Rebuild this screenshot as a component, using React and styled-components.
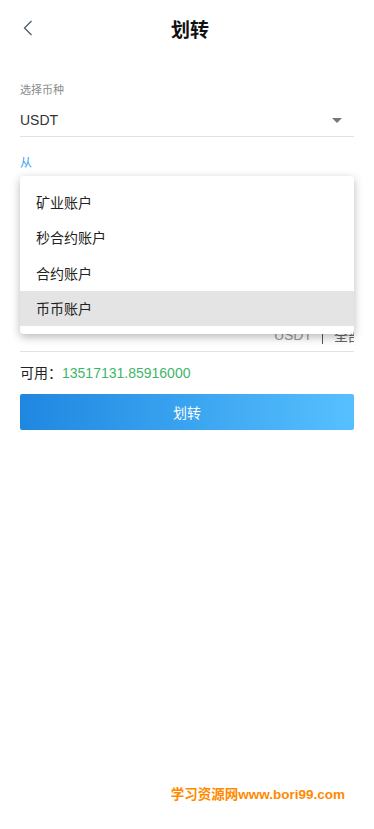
import React from 'react';
import styled, { createGlobalStyle } from 'styled-components';

const accounts = ['矿业账户', '秒合约账户', '合约账户', '币币账户'];

const GlobalStyle = createGlobalStyle`
  html, body {
    margin: 0;
    padding: 0;
    background: #fff;
    font-family: "Liberation Sans", "Noto Sans CJK SC", sans-serif;
  }
`;

const App = () => {
  return (
    <Page>
      <GlobalStyle />
      <Header>
        <Back>
          <svg width="10" height="16" viewBox="0 0 10 16">
            <path d="M8.5 1 L1.5 8 L8.5 15" fill="none" stroke="#4f5b66" strokeWidth="1.3" />
          </svg>
        </Back>
        <Title>划转</Title>
      </Header>

      <Body>
        <Field>
          <Label>选择币种</Label>
          <SelectRow>
            <span>USDT</span>
            <Caret />
          </SelectRow>
        </Field>

        <Field $gap={18}>
          <Label $active>从</Label>
          <SelectRow>
            <span>币币账户</span>
            <Caret />
          </SelectRow>
          <Menu>
            {accounts.map((a) => (
              <MenuItem key={a} $selected={a === '币币账户'}>{a}</MenuItem>
            ))}
          </Menu>
        </Field>

        <Field $gap={18}>
          <Label>到</Label>
          <SelectRow>
            <span>合约账户</span>
            <Caret />
          </SelectRow>
        </Field>

        <Field $gap={14}>
          <Label>数量</Label>
          <AmountRow>
            <AmountInput />
            <Unit>USDT</Unit>
            <Divider />
            <All>全部</All>
          </AmountRow>
        </Field>

        <Available>
          可用：<Amount>13517131.85916000</Amount>
        </Available>

        <Button>划转</Button>
      </Body>

      <Footer>学习资源网www.bori99.com</Footer>
    </Page>
  );
};

const Page = styled.div`
  min-height: 100vh;
  display: flex;
  flex-direction: column;
`;

const Header = styled.div`
  position: relative;
  height: 56px;
  display: flex;
  align-items: center;
  justify-content: center;
`;

const Back = styled.div`
  position: absolute;
  left: 23px;
  top: 20px;
  width: 10px;
  height: 16px;
  display: flex;
`;

const Title = styled.h1`
  margin: 0;
  padding-left: 6px;
  font-size: 19px;
  font-weight: bold;
  color: #111;
`;

const Body = styled.div`
  padding: 26px 20px 0;
`;

const Field = styled.div`
  position: relative;
  margin-top: ${(p) => p.$gap || 0}px;
`;

const Label = styled.div`
  font-size: ${(p) => (p.$active ? 12 : 11)}px;
  line-height: 16px;
  color: ${(p) => (p.$active ? '#3d9ff3' : '#8a8a8a')};
`;

const SelectRow = styled.div`
  margin-top: 6px;
  height: 32px;
  display: flex;
  align-items: center;
  justify-content: space-between;
  border-bottom: 1px solid #e2e2e2;
  font-size: 14px;
  color: #333;
`;

const Caret = styled.span`
  margin-right: 12px;
  width: 0;
  height: 0;
  border-left: 5px solid transparent;
  border-right: 5px solid transparent;
  border-top: 5px solid #777;
`;

const Menu = styled.div`
  position: absolute;
  top: 21px;
  left: 0;
  right: 0;
  z-index: 10;
  padding: 8px 0;
  background: #fff;
  border-radius: 4px;
  box-shadow: 0 3px 10px rgba(0, 0, 0, 0.28);
`;

const MenuItem = styled.div`
  height: 35.5px;
  padding: 0 16px;
  display: flex;
  align-items: center;
  font-size: 14px;
  color: #222;
  background: ${(p) => (p.$selected ? '#e4e4e4' : 'transparent')};
`;

const AmountRow = styled.div`
  margin-top: 6px;
  height: 32px;
  display: flex;
  align-items: center;
  overflow: hidden;
  border-bottom: 1px solid #e2e2e2;
  font-size: 14px;
  white-space: nowrap;
`;

const AmountInput = styled.span`
  flex: 1;
`;

const Unit = styled.span`
  color: #999;
`;

const Divider = styled.span`
  width: 1px;
  height: 17px;
  margin: 0 11px 0 10px;
  background: #555;
`;

const All = styled.span`
  margin-right: -8px;
  color: #666;
`;

const Available = styled.div`
  margin-top: 11px;
  font-size: 14px;
  line-height: 20px;
  color: #222;
`;

const Amount = styled.span`
  color: #3fb56a;
`;

const Button = styled.button`
  display: block;
  width: 100%;
  height: 36px;
  margin-top: 11px;
  border: 0;
  border-radius: 2px;
  background: linear-gradient(90deg, #1f87e0 0%, #56c0ff 100%);
  color: #fff;
  font-family: inherit;
  font-size: 14px;
`;

const Footer = styled.div`
  margin-top: auto;
  padding: 0 29px 26px 0;
  text-align: right;
  font-size: 13.5px;
  line-height: 16px;
  font-weight: bold;
  color: #ff8a00;
`;

export default App;
